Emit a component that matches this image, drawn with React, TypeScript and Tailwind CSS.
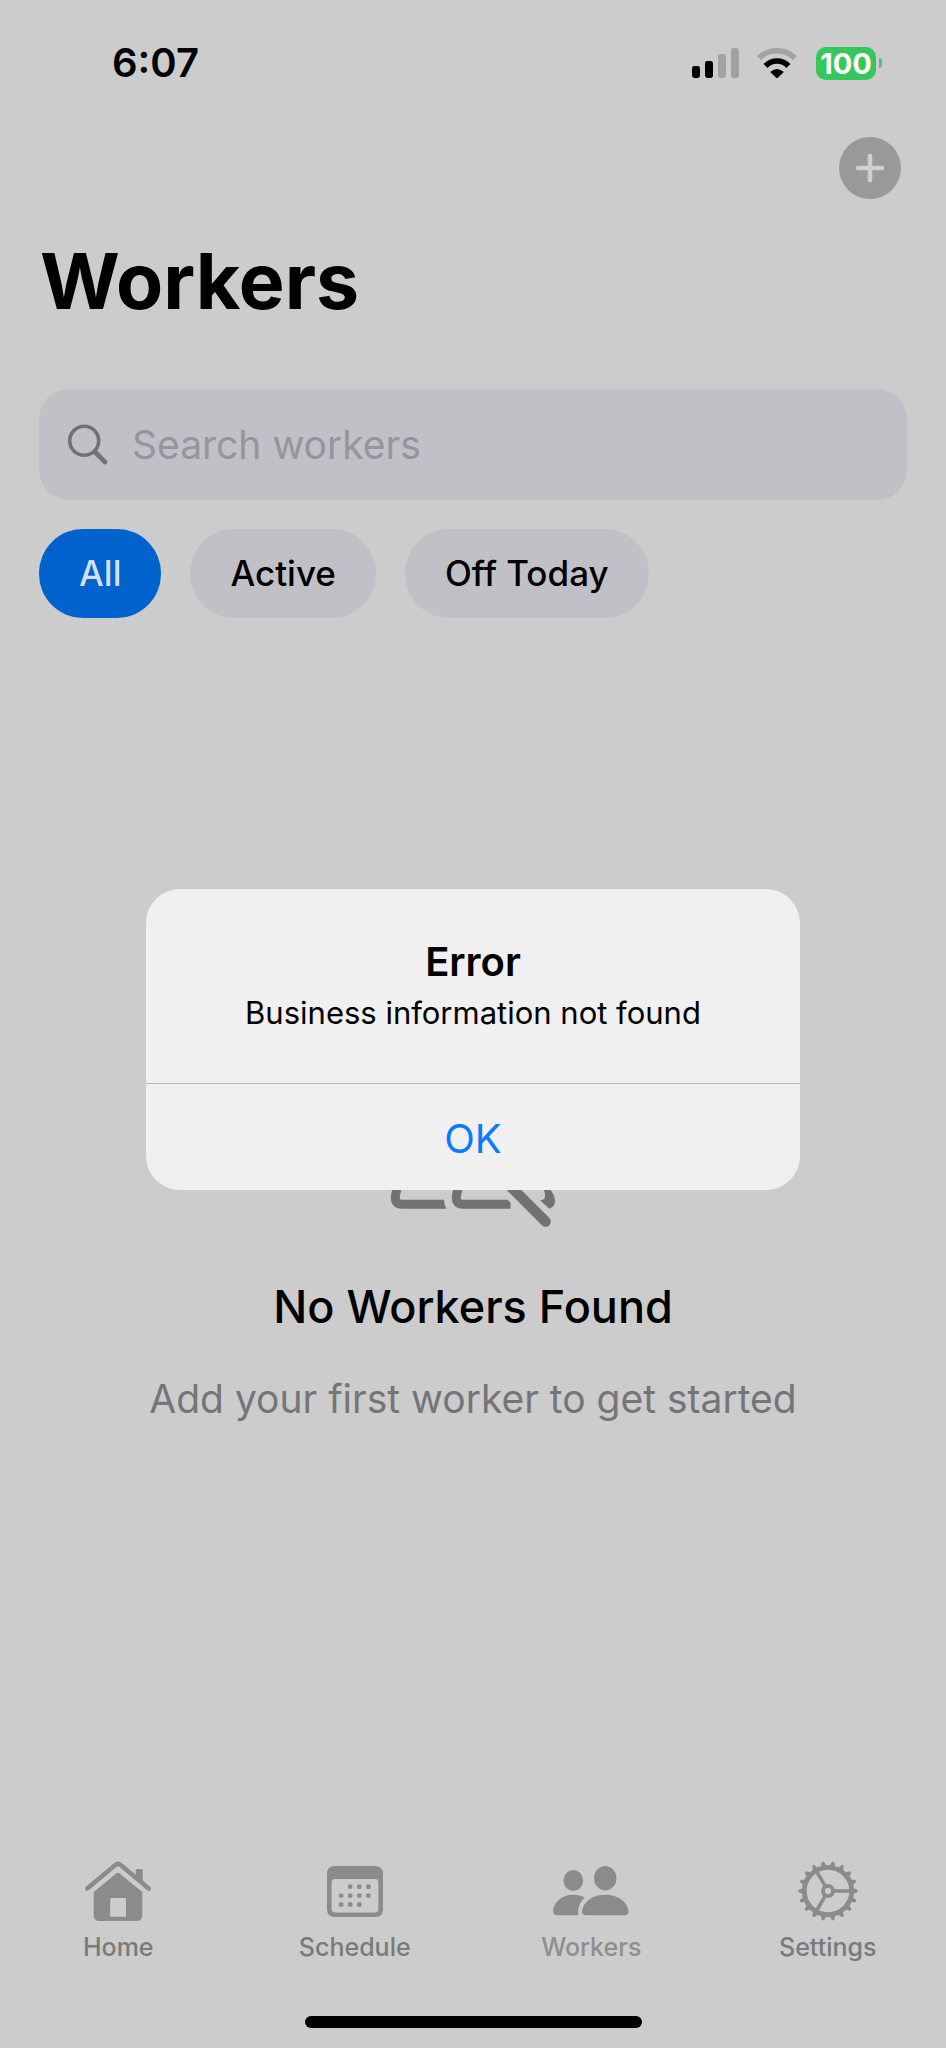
import React from "react";

const toothAngles = Array.from({ length: 18 }, (_, i) => i * 20);

function SignalIcon() {
  return (
    <svg width="47" height="30" viewBox="0 0 47 30" aria-hidden="true">
      <rect x="0" y="18" width="8" height="12" rx="2.4" fill="#000" />
      <rect x="13" y="13" width="8" height="17" rx="2.4" fill="#000" />
      <rect x="26" y="6" width="8" height="24" rx="2.4" fill="#a2a2a2" />
      <rect x="39" y="0" width="8" height="30" rx="2.4" fill="#a2a2a2" />
    </svg>
  );
}

function WifiIcon() {
  return (
    <svg width="42" height="30" viewBox="0 0 42 30" aria-hidden="true">
      <path d="M3 10A26 26 0 0 1 39 10" fill="none" stroke="#a2a2a2" strokeWidth="5.4" />
      <path d="M9.6 18A15.4 15.4 0 0 1 32.4 18" fill="none" stroke="#000" strokeWidth="5.6" />
      <path d="M14.7 23.6Q21 18.4 27.3 23.6Q27.6 24.2 27.1 24.7L21.8 29.7Q21 30.3 20.2 29.7L14.9 24.7Q14.4 24.2 14.7 23.6Z" fill="#000" />
    </svg>
  );
}

function SearchIcon() {
  return (
    <svg width="40" height="41" viewBox="0 0 40 41" fill="none" stroke="#717176" aria-hidden="true">
      <circle cx="16.2" cy="16.7" r="14.5" strokeWidth="3.6" />
      <path d="M27 28L37 38" strokeWidth="4.6" strokeLinecap="round" />
    </svg>
  );
}

function NoWorkersIcon() {
  return (
    <svg width="186" height="138" viewBox="0 0 186 138" fill="none" aria-hidden="true">
      <g stroke="#717176" strokeWidth="9">
        <ellipse cx="50" cy="24" rx="17" ry="19" />
        <ellipse cx="118" cy="19" rx="20" ry="17" />
        <path d="M63 115.2H22Q14.4 115.2 15.4 107C18 88 32 68 54 65" />
        <path d="M130.5 115.2H83Q75.4 115.2 76.4 107C79 92 84 78 96 70" />
      </g>
      <path d="M62 110.7H64Q64.2 116 66.4 119.7H62Z" fill="#717176" />
      <path d="M40 7L165.5 132.5" stroke="#cccccc" strokeWidth="23" />
      <path d="M155 96C166 94 174 101 175.2 112Q174.5 118 169.3 119.7L160 111.3C165.5 110.7 166.5 108 163.3 99Z" fill="#717176" />
      <path d="M40 7L165.5 132.5" stroke="#717176" strokeWidth="10.4" strokeLinecap="round" />
    </svg>
  );
}

function HomeIcon() {
  return (
    <svg width="66" height="60" viewBox="0 0 66 60" fill="#8b8b8b" aria-hidden="true">
      <path d="M2.3 28.5L30.6 4.8Q33 3 35.4 4.8L63.7 28.5" transform="translate(0 -1)" fill="none" stroke="#8b8b8b" strokeWidth="4.5" strokeLinecap="round" />
      <path d="M50.8 9.2Q50.8 8 52 8H56.5Q57.7 8 57.7 9.2V24L50.8 18.2Z" />
      <path fillRule="evenodd" d="M8.7 31L31.5 12.2Q33 11.1 34.5 12.2L57.3 31V54Q57.3 60 51.3 60H14.7Q8.7 60 8.7 54ZM26.6 37Q25.2 37 25.2 38.4V55.7H41V38.4Q41 37 39.6 37Z" />
    </svg>
  );
}

function ScheduleIcon() {
  const dots = [
    [23.2, 20.7], [32.3, 20.7], [41.4, 20.7],
    [14.1, 29.6], [23.2, 29.6], [32.3, 29.6], [41.4, 29.6],
    [14.1, 38.5], [23.2, 38.5], [32.3, 38.5],
  ];
  return (
    <svg width="56" height="51" viewBox="0 0 56 51" fill="#8b8b8b" aria-hidden="true">
      <path fillRule="evenodd" d="M8 0H48Q56 0 56 8V43Q56 51 48 51H8Q0 51 0 43V8Q0 0 8 0ZM8 13Q4.6 13 4.6 16.4V43Q4.6 46.4 8 46.4H48Q51.4 46.4 51.4 43V16.4Q51.4 13 48 13Z" />
      {dots.map(([x, y]) => (
        <rect key={`${x}-${y}`} x={x - 2.2} y={y - 2.2} width="4.4" height="4.4" rx="1.3" />
      ))}
    </svg>
  );
}

function WorkersIcon() {
  return (
    <svg width="76" height="50" viewBox="0 0 76 50" fill="#8b8b8b" aria-hidden="true">
      <ellipse cx="20.3" cy="14.5" rx="9.8" ry="10.5" />
      <ellipse cx="52.2" cy="12.2" rx="11.2" ry="12.2" />
      <path d="M5 49.3Q0 49.3 0 45C1 36 9 28.8 20.3 28.8C25 28.8 29 30 32 31.8C27 36 24.5 41 25.4 49.3Z" />
      <path d="M33.5 49.3Q29 49.3 29 45.5C30 36 39.5 28.8 52.2 28.8C65 28.8 74.5 36 75.5 45.5Q75.5 49.3 71 49.3Z" />
    </svg>
  );
}

function SettingsIcon() {
  return (
    <svg width="60" height="60" viewBox="0 0 60 60" fill="none" stroke="#8b8b8b" aria-hidden="true">
      <circle cx="30" cy="30" r="23.7" strokeWidth="4.8" />
      <circle cx="30" cy="30" r="5" strokeWidth="3.8" />
      {[0, 120, 240].map((a) => (
        <path key={a} d="M36 30H53" strokeWidth="3.6" transform={`rotate(${a} 30 30)`} />
      ))}
      {toothAngles.map((a) => (
        <path key={a} d="M54.5 27L58.8 28.5Q61 30 58.8 31.5L54.5 33Z" fill="#8b8b8b" stroke="none" transform={`rotate(${a} 30 30)`} />
      ))}
    </svg>
  );
}

const filters = ["All", "Active", "Off Today"];

const tabs = [
  { label: "Home", icon: <HomeIcon /> },
  { label: "Schedule", icon: <ScheduleIcon /> },
  { label: "Workers", icon: <WorkersIcon /> },
  { label: "Settings", icon: <SettingsIcon /> },
];

export default function App() {
  return (
    <div className="relative flex min-h-screen flex-col bg-[#cccccc] font-['Inter',sans-serif] text-black">
      <div className="flex h-[126px] items-center justify-between pr-16 pl-28">
        <time className="text-[40px] leading-none font-semibold">6:07</time>
        <div className="flex items-center">
          <SignalIcon />
          <div className="ml-[17px]">
            <WifiIcon />
          </div>
          <div className="ml-[18px] flex h-[33px] w-[60px] items-center justify-center rounded-[10px] bg-[#35c759] text-[29px] leading-none font-bold text-white">
            100
          </div>
          <div className="ml-[3px] h-[10px] w-[3px] rounded-r-full bg-[#5cba72]" />
        </div>
      </div>

      <header className="px-10">
        <div className="flex justify-end pt-[11px] pr-[5px]">
          <button type="button" aria-label="Add worker" className="flex size-[62px] items-center justify-center rounded-full bg-[#999999]">
            <svg width="30" height="30" viewBox="0 0 30 30" fill="none" stroke="#cfcfcf" strokeWidth="4.6" strokeLinecap="round" aria-hidden="true">
              <path d="M15 3V27M3 15H27" />
            </svg>
          </button>
        </div>
        <h1 className="pt-[34px] text-[77px] leading-[96px] font-bold">Workers</h1>
      </header>

      <main className="flex flex-1 flex-col px-[39px] pt-[60px]">
        <label className="flex h-[111px] items-center gap-6 rounded-[30px] bg-[#c1c0c6] px-[29px]">
          <SearchIcon />
          <input
            type="search"
            aria-label="Search workers"
            placeholder="Search workers"
            className="min-w-0 flex-1 bg-transparent pt-[2px] text-[39px] outline-none placeholder:text-[#95959a]"
          />
        </label>
        <div className="flex gap-[29px] pt-[29px]">
          {filters.map((name, i) => (
            <button
              key={name}
              type="button"
              aria-pressed={i === 0}
              className={
                i === 0
                  ? "h-[89px] rounded-[44px] bg-[#0062cc] px-10 text-[35px] font-medium text-[#d2dfee]"
                  : "h-[89px] rounded-[44px] bg-[#c1c0c6] px-10 text-[35px] font-medium"
              }
            >
              {name}
            </button>
          ))}
        </div>
        <section className="flex flex-1 flex-col items-center justify-center pt-[94px] text-center">
          <NoWorkersIcon />
          <h2 className="pt-[50px] text-[45px] leading-[60px] font-medium">No Workers Found</h2>
          <p className="pt-[37px] text-[39px] leading-[50px] text-[#757579]">Add your first worker to get started</p>
        </section>
      </main>

      <nav className="grid grid-cols-4 pt-[60px]">
        {tabs.map((tab) => (
          <a key={tab.label} href={`#${tab.label.toLowerCase()}`} className="flex flex-col items-center gap-[10px]">
            <span className="flex h-[60px] items-center">{tab.icon}</span>
            <span className={tab.label === "Workers" ? "text-[25px] leading-8 font-medium text-[#8e8e8e]" : "text-[25px] leading-8 font-medium text-[#7a7a7a]"}>
              {tab.label}
            </span>
          </a>
        ))}
      </nav>
      <div className="flex justify-center pt-[53px] pb-5">
        <div className="h-3 w-[337px] rounded-full bg-black" />
      </div>

      <div className="absolute inset-0 flex items-center justify-center pt-[31px]">
        <div role="alertdialog" aria-modal="true" aria-labelledby="alert-title" aria-describedby="alert-text" className="w-[654px] max-w-full overflow-hidden rounded-[34px] bg-[#f0f0f0] text-center">
          <div className="px-10 pt-12 pb-[50px]">
            <h2 id="alert-title" className="text-[40px] leading-[50px] font-semibold">Error</h2>
            <p id="alert-text" className="pt-[6px] text-[31px] leading-[40px]">Business information not found</p>
          </div>
          <button type="button" className="h-[107px] w-full border-t border-[#b9b9b9] pt-1 text-[40px] text-[#0a7aff]">
            OK
          </button>
        </div>
      </div>
    </div>
  );
}
